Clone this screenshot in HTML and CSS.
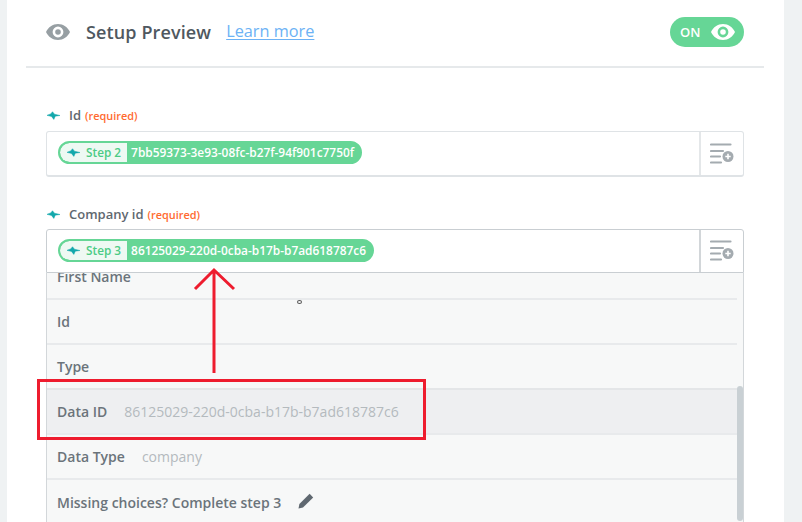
FILE: index.html
```html
<!DOCTYPE html>
<html lang="en">
<head>
<meta charset="utf-8">
<title>Setup Preview</title>
<link rel="stylesheet" href="styles.css">
</head>
<body>
<svg class="defs" width="0" height="0" aria-hidden="true">
  <symbol id="pulse" viewBox="0 0 16 10">
    <path d="M0 4.800 4.600 3 6.800 0.400 9.200 3.400 16 5 10.200 5.800 8.400 9.800 5.600 6.200Z" fill="#13a8ac" stroke="#13a8ac" stroke-width=".6" stroke-linejoin="round"/>
  </symbol>
  <symbol id="eye" viewBox="0 0 24 16">
    <path fill-rule="evenodd" d="M12 0C6.600 0 2.400 3.200 0 8c2.400 4.800 6.600 8 12 8s9.600-3.200 12-8C21.600 3.200 17.400 0 12 0Zm0 2.600A5.400 5.400 0 1 1 12 13.400 5.400 5.400 0 0 1 12 2.600Zm0 2.600A2.800 2.800 0 1 0 12 10.800 2.800 2.800 0 0 0 12 5.200Z" fill="currentColor"/>
  </symbol>
  <symbol id="listadd" viewBox="0 0 24 22">
    <path d="M1 1.500H20.500M1 8H13M1 13.500H10M1 19.500H11" stroke="#a4abb0" stroke-width="2.200" stroke-linecap="round" fill="none"/>
    <circle cx="18" cy="13.500" r="5.500" fill="#a4abb0"/>
    <path d="M18 10.800V16.200M15.300 13.500H20.700" stroke="#fff" stroke-width="1.600"/>
  </symbol>
</svg>

<main class="card">
  <header class="head">
    <svg class="head-eye"><use href="#eye"/></svg>
    <h1 class="title">Setup Preview</h1>
    <a class="learn" href="#">Learn more</a>
    <span class="toggle">ON <svg class="toggle-eye"><use href="#eye"/></svg></span>
  </header>

  <section class="fields">
    <div class="field field-first">
      <div class="label"><svg class="pulse"><use href="#pulse"/></svg><span>Id</span> <em>(required)</em></div>
      <div class="box">
        <div class="box-main">
          <span class="pill"><span class="pill-step"><svg class="pulse pulse-sm"><use href="#pulse"/></svg>Step 2</span><span class="pill-val">7bb59373-3e93-08fc-b27f-94f901c7750f</span></span>
        </div>
        <div class="box-btn"><svg class="listadd"><use href="#listadd"/></svg></div>
      </div>
    </div>

    <div class="field field-open">
      <div class="label"><svg class="pulse"><use href="#pulse"/></svg><span>Company id</span> <em>(required)</em></div>
      <div class="box box-open">
        <div class="box-main">
          <span class="pill"><span class="pill-step"><svg class="pulse pulse-sm"><use href="#pulse"/></svg>Step 3</span><span class="pill-val">86125029-220d-0cba-b17b-b7ad618787c6</span></span>
        </div>
        <div class="box-btn"><svg class="listadd"><use href="#listadd"/></svg></div>
      </div>
      <div class="drop">
        <ul class="list">
          <li class="row"><b>First Name</b></li>
          <li class="row"><b>Id</b></li>
          <li class="row"><b>Type</b></li>
          <li class="row row-hi"><b>Data ID</b><i>86125029-220d-0cba-b17b-b7ad618787c6</i></li>
          <li class="row"><b>Data Type</b><i>company</i></li>
          <li class="row row-last"><b>Missing choices? Complete step 3</b>
            <svg class="pencil" viewBox="0 0 16 16"><path d="M11.600 0.800 15.200 4.400 5 14.600 0.500 15.500 1.400 11Z" fill="#5f6870"/></svg>
          </li>
        </ul>
        <div class="thumb"></div>
      </div>
    </div>
  </section>
</main>

<svg class="arrow" viewBox="0 0 44 106" aria-hidden="true">
  <path d="M21 106V3M2 22 21 3 41 22" stroke="#ee1c2e" stroke-width="3" fill="none"/>
</svg>
<div class="callout"></div>
<span class="speck"></span>
</body>
</html>
```

FILE: styles.css
```css
* { box-sizing: border-box; }
html, body { margin: 0; height: 522px; overflow: hidden; }
body {
  background: #eff2f3;
  font-family: "Open Sans", "Noto Sans", sans-serif;
  color: #5f6870;
  padding: 0 18px 0 7px;
  position: relative;
}
.defs { position: absolute; }
.card { background: #fff; height: 522px; padding: 0 20px 0 19px; }

.head {
  height: 68px;
  border-bottom: 2px solid #e6e9eb;
  display: flex;
  align-items: center;
  padding: 0 20px 2px 20px;
}
.head-eye { width: 24px; height: 16px; color: #979fa3; flex: none; }
.title { margin: 0 0 0 16px; font-size: 18px; font-weight: 600; color: #4f5860; letter-spacing: .12px; }
.learn { margin: 0 0 2px 15px; font-size: 16.300px; color: #6cb2f5; text-decoration: underline; text-underline-offset: 2px; }
.toggle {
  margin-left: auto;
  width: 74px; height: 30px;
  border-radius: 15px;
  background: #66d696;
  color: #fff;
  font-size: 13px;
  font-weight: 600;
  display: flex; align-items: center; gap: 11px;
  padding-left: 10px;
}
.toggle-eye { width: 24px; height: 16px; color: #fff; }

.fields { padding: 0 20px; }
.field-first { padding-top: 37px; }
.field-open { padding-top: 27px; }
.label { display: flex; align-items: center; height: 20px; font-size: 13px; font-weight: 600; color: #5f6870; margin-bottom: 6px; }
.field-open .label { margin-bottom: 5px; }
.label em { font-style: normal; font-size: 10.900px; color: #ff6a30; margin-left: 4px; }
.pulse { width: 13px; height: 9px; margin: 0 9px 0 1px; flex: none; }
.pulse-sm { margin: 1px 6px 0 0; }

.box { display: flex; height: 46px; border: 1px solid #dfe3e6; border-bottom-width: 2px; border-radius: 3px; background: #fff; }
.box-open { height: 44px; border-color: #c9ced2; border-bottom-width: 1px; border-radius: 3px 3px 0 0; }
.box-main { flex: 1; display: flex; align-items: center; padding: 0 0 3px 11px; }
.box-open .box-main { padding-bottom: 2px; }
.box-btn { width: 44px; border-left: 2px solid #e4e7e9; display: flex; align-items: center; justify-content: center; }
.box-open .box-btn { border-left-color: #d2d6d9; }
.listadd { width: 24px; height: 22px; }

.pill { display: flex; align-items: center; height: 23px; border-radius: 12px; background: #66d696; border: 2px solid #66d696; color: #fff; font-size: 11.900px; font-weight: 600; overflow: hidden; }
.pill-step { display: flex; align-items: center; height: 19px; background: #eef9f3; color: #4ccb85; padding: 0 6px 0 7px; border-radius: 10px 0 0 10px; font-size: 11.800px; }
.pill-val { padding: 0 6px 0 4px; }

.drop { position: relative; height: 260px; overflow: hidden; background: #f7f8f8; border: solid #d3d7da; border-width: 0 1px; }
.list { list-style: none; margin: -18px 0 0; padding: 0 6px 0 0; }
.row { height: 45px; border-bottom: 2px solid #e8eaec; display: flex; align-items: center; padding: 0 0 0 10px; font-size: 14px; gap: 17px; }
.row b { font-weight: 600; color: #6b747b; }
.row i { font-style: normal; color: #b4babe; font-weight: 400; }
.row-hi { background: #eeeff1; border-top: 2px solid #e4e6e8; margin-top: -2px; height: 47px; }
.row-last { border-bottom: 0; }
.pencil { width: 16px; height: 16px; margin-top: -3px; }
.thumb { position: absolute; right: 0; top: 113px; width: 6px; height: 135px; background: #c9d0d4; border-radius: 3px; }

.arrow { position: absolute; left: 193px; top: 267px; width: 44px; height: 106px; }
.callout { position: absolute; left: 37px; top: 379px; width: 389px; height: 61px; border: 3px solid #ee1c2e; }
.speck { position: absolute; left: 297px; top: 300px; width: 5px; height: 4px; border: 1px solid #555; border-radius: 50%; }
```
